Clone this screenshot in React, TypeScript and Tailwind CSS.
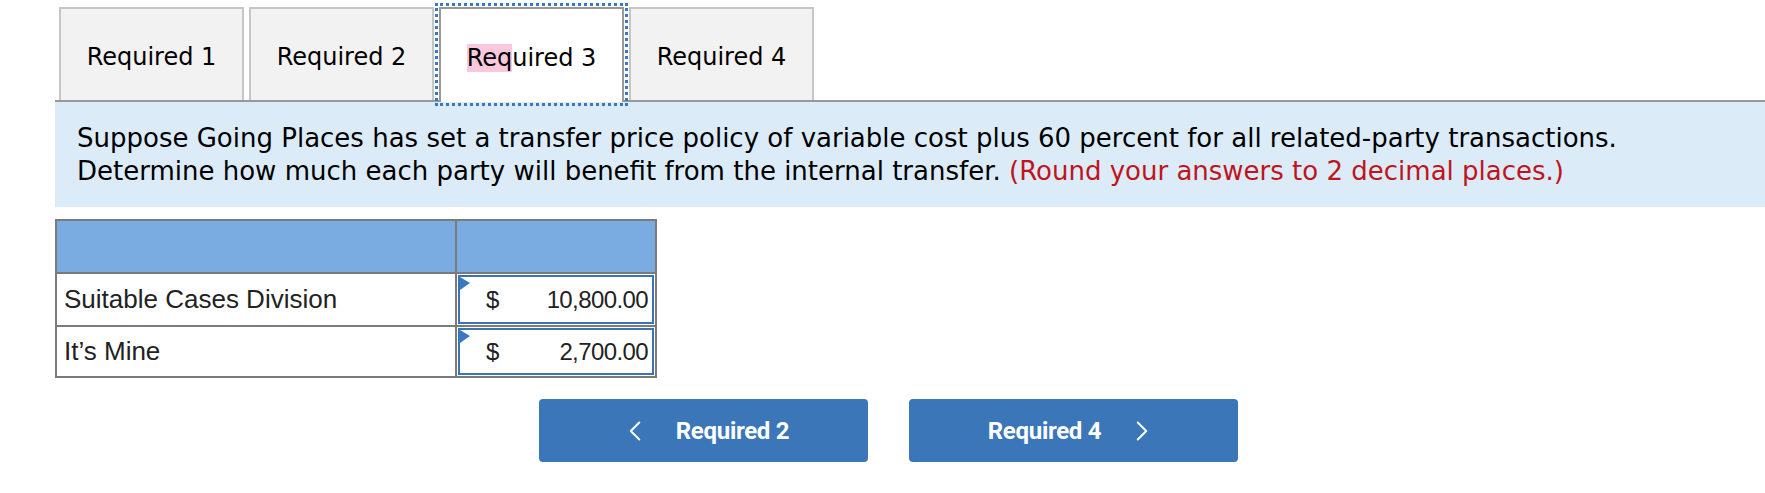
import { ChevronLeft, ChevronRight } from 'lucide-react'

const tabs = ['Required 1', 'Required 2', 'Required 3', 'Required 4']

const rows = [
  { label: 'Suitable Cases Division', value: '10,800.00', h: 'h-[53px]' },
  { label: 'It’s Mine', value: '2,700.00', h: 'h-[49px]' },
]

export default function App() {
  return (
    <div className="min-h-screen w-full bg-white pt-[7px]">
      <div className="ml-[55px] flex gap-[5px] border-b-2 border-[#999999] pl-[4px]">
        {tabs.map((t, i) =>
          i === 2 ? (
            <div
              key={t}
              className="relative z-10 -mb-[2px] flex h-[95px] w-[185px] items-center justify-center border-2 border-b-0 border-[#999999] bg-white pt-[4px] text-[24px] text-black outline-[3px] outline-offset-[1px] outline-dotted outline-[#3b78c2]"
              style={{ fontFamily: '"DejaVu Sans", Verdana, sans-serif' }}
            >
              <span>
                <span className="bg-[#f9c8de]">Req</span>uired 3
              </span>
            </div>
          ) : (
            <div
              key={t}
              className="flex h-[93px] w-[185px] items-center justify-center border-2 border-b-0 border-[#c6c6c6] bg-[#f2f2f2] pt-[4px] text-[24px] text-black"
              style={{ fontFamily: '"DejaVu Sans", Verdana, sans-serif' }}
            >
              {t}
            </div>
          )
        )}
      </div>

      <div
        className="ml-[55px] h-[105px] bg-[#dbecf8] px-[22px] pt-[20px] text-[26px] leading-[33px] text-black"
        style={{ fontFamily: '"DejaVu Sans", Verdana, sans-serif' }}
      >
        Suppose Going Places has set a transfer price policy of variable cost plus 60 percent for all related-party transactions.
        <br />
        Determine how much each party will benefit from the internal transfer.{' '}
        <span className="text-[#c0141c]">(Round your answers to 2 decimal places.)</span>
      </div>

      <div
        className="ml-[55px] mt-[12px] w-[602px] border-2 border-[#7b7b7b] text-[26px] text-[#222222]"
        style={{ fontFamily: '"Liberation Sans", Arial, sans-serif' }}
      >
        <div className="grid h-[53px] grid-cols-[398px_2px_198px] border-b-2 border-[#7b7b7b] bg-[#7aace2]">
          <div />
          <div className="bg-[#7b7b7b]" />
          <div />
        </div>
        {rows.map((r, i) => (
          <div
            key={r.label}
            className={`grid grid-cols-[398px_2px_198px] ${r.h} ${i === 0 ? 'border-b-2 border-[#7b7b7b]' : ''}`}
          >
            <div className="flex items-center pl-[7px]">{r.label}</div>
            <div className="bg-[#7b7b7b]" />
            <div className="p-[1px]">
              <div className="relative flex h-full items-center border-2 border-[#3a73b6] bg-white pl-[26px] pr-[4px] text-[24px]">
                <svg className="absolute left-0 top-0" width="10" height="13" viewBox="0 0 10 13">
                  <polygon points="0,0 10,6 0,13" fill="#3b78c2" />
                </svg>
                <span>$</span>
                <span className="ml-auto tracking-[-0.6px]">{r.value}</span>
              </div>
            </div>
          </div>
        ))}
      </div>

      <div
        className="mt-[21px] flex justify-center gap-[41px] pl-[12px]"
        style={{ fontFamily: 'Roboto, "Liberation Sans", sans-serif' }}
      >
        <button className="flex h-[63px] w-[329px] items-center justify-center gap-[24px] rounded-[4px] bg-[#3b76b8] text-[24px] font-bold tracking-[-0.3px] text-white">
          <ChevronLeft size={34} strokeWidth={1.4} />
          <span>Required 2</span>
        </button>
        <button className="flex h-[63px] w-[329px] items-center justify-center gap-[24px] rounded-[4px] bg-[#3b76b8] text-[24px] font-bold tracking-[-0.3px] text-white">
          <span>Required 4</span>
          <ChevronRight size={34} strokeWidth={1.4} />
        </button>
      </div>
    </div>
  )
}
